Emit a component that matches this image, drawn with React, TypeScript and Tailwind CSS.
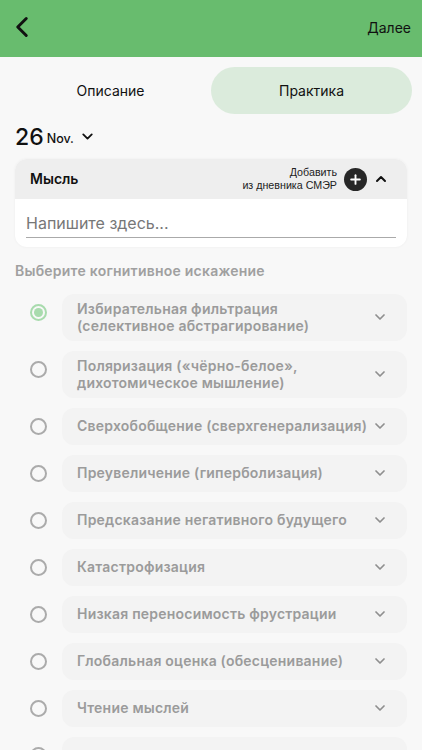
import { ChevronDown, ChevronLeft, ChevronUp, Plus } from 'lucide-react';

const distortions = [
  'Избирательная фильтрация\n(селективное абстрагирование)',
  'Поляризация («чёрно-белое»,\nдихотомическое мышление)',
  'Сверхобобщение (сверхгенерализация)',
  'Преувеличение (гиперболизация)',
  'Предсказание негативного будущего',
  'Катастрофизация',
  'Низкая переносимость фрустрации',
  'Глобальная оценка (обесценивание)',
  'Чтение мыслей',
  '',
];

export default function App() {
  return (
    <div className="h-[750px] w-[422px] overflow-hidden bg-[#f8f8f8] font-['Inter',sans-serif] text-[#111]">
      {/* Header */}
      <header className="flex h-[57px] items-center justify-between bg-[#68bc6e] pr-[11px] pb-[3px] pl-[5px]">
        <ChevronLeft className="h-[34px] w-[34px]" strokeWidth={2.1} />
        <span className="text-[14px]">Далее</span>
      </header>

      {/* Tabs */}
      <div className="mt-[10px] flex px-[10px]">
        <div className="flex h-[47px] flex-1 items-center justify-center text-[14px]">Описание</div>
        <div className="flex h-[47px] w-[201px] items-center justify-center rounded-full bg-[#dbebdc] text-[14px]">
          Практика
        </div>
      </div>

      {/* Date */}
      <div className="mt-[10px] flex h-[27px] items-center px-[15px]">
        <span className="text-[23px] font-medium">26</span>
        <span className="mt-[4px] ml-[3px] text-[12.5px] font-medium">Nov.</span>
        <ChevronDown className="mb-[2px] ml-[5px] h-[17px] w-[17px]" strokeWidth={2.6} />
      </div>

      {/* Thought card */}
      <section className="mx-[15px] mt-[8px] overflow-hidden rounded-[12px] bg-white shadow-[0_0_3px_rgba(0,0,0,0.05)]">
        <div className="flex h-[40px] items-center bg-[#eeeeee] pr-[18px] pl-[15px]">
          <span className="mb-[2px] flex-1 text-[14px] font-semibold">Мысль</span>
          <span className="text-right font-['Liberation_Sans',sans-serif] text-[10.7px] leading-[13.5px] text-[#222]">
            Добавить
            <br />
            из дневника СМЭР
          </span>
          <span className="ml-[7px] flex h-[23px] w-[23px] items-center justify-center rounded-full bg-[#272727]">
            <Plus className="h-[15px] w-[15px] text-white" strokeWidth={3} />
          </span>
          <ChevronUp className="ml-[6px] h-[16px] w-[16px]" strokeWidth={3} />
        </div>
        <div className="px-[11px] pb-[9px]">
          <div className="flex h-[39px] items-end border-b border-[#aaaaaa] pb-[2px] text-[16px] text-[#777]">
            Напишите здесь...
          </div>
        </div>
      </section>

      <h2 className="mt-[16px] px-[15px] text-[14px] leading-[16px] font-semibold tracking-[0.23px] text-[#a0a0a0]">
        Выберите когнитивное искажение
      </h2>

      {/* Distortion list */}
      <ul className="mt-[15px] flex flex-col gap-[10px] pr-[15px] pl-[30px]">
        {distortions.map((text, index) => (
          <li key={index} className="flex items-start">
            <span
              className={
                index === 0
                  ? 'mt-[10px] flex h-[17px] w-[17px] shrink-0 items-center justify-center rounded-full border-2 border-[#a8dbad]'
                  : 'mt-[10px] h-[17px] w-[17px] shrink-0 rounded-full border-2 border-[#ababab]'
              }
            >
              {index === 0 && <span className="h-[9px] w-[9px] rounded-full bg-[#a8dbad]" />}
            </span>
            <div className="ml-[15px] flex min-h-[37px] flex-1 items-center rounded-[12px] bg-[#f3f3f3] pt-[5.5px] pr-[19px] pb-[7.5px] pl-[15px]">
              <span className="flex-1 text-[14px] leading-[17px] font-semibold tracking-[0.21px] whitespace-pre-line text-[#9b9b9b]">
                {text}
              </span>
              <ChevronDown className="h-[16px] w-[16px] shrink-0 text-[#8f8f8f]" strokeWidth={2.6} />
            </div>
          </li>
        ))}
      </ul>
    </div>
  );
}
